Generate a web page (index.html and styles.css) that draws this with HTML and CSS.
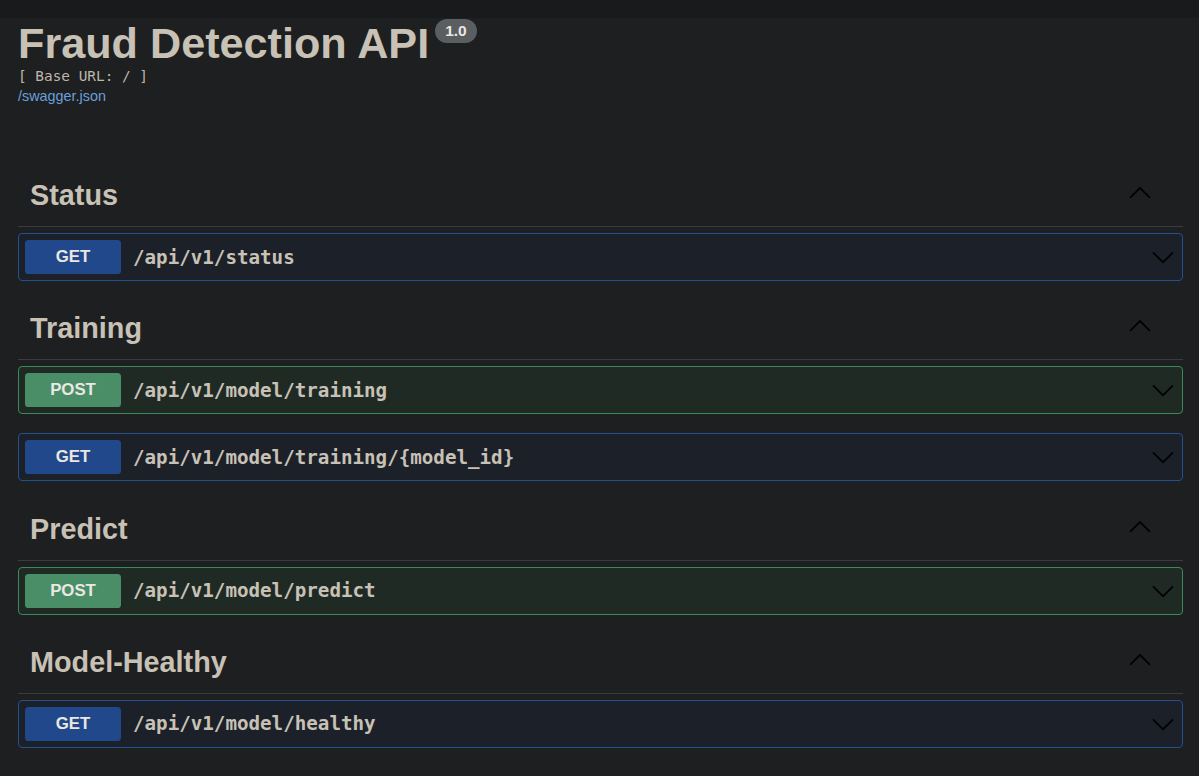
FILE: index.html
```html
<!DOCTYPE html>
<html>
<head>
<meta charset="utf-8">
<title>Fraud Detection API</title>
<link rel="stylesheet" href="styles.css">
</head>
<body>
<div class="topstrip"></div>
<div class="wrapper">
  <div class="info">
    <h2 class="title"><span>Fraud Detection API</span><span class="version">1.0</span></h2>
    <pre class="base-url">[ Base URL: / ]</pre>
    <a class="spec-link" href="#">/swagger.json</a>
  </div>

  <section class="tag-section">
    <h3 class="tag"><span>Status</span>
      <svg class="arrow-up" viewBox="0 0 20 20" width="24" height="24"><path d="M17.418 14.908c.272.268.709.268.979 0s.271-.701 0-.969l-7.908-7.83c-.27-.268-.707-.268-.979 0l-7.908 7.83c-.27.268-.27.701 0 .969.271.268.709.268.979 0L10 7.767l7.418 7.141z"/></svg>
    </h3>
    <div class="opblock get">
      <span class="method">GET</span><span class="path">/api/v1/status</span>
      <svg class="arrow-down" viewBox="0 0 20 20" width="24" height="24"><path d="M17.418 6.109c.272-.268.709-.268.979 0s.271.701 0 .969l-7.908 7.83c-.27.268-.707.268-.979 0l-7.908-7.83c-.27-.268-.27-.701 0-.969.271-.268.709-.268.979 0L10 13.25l7.418-7.141z"/></svg>
    </div>
  </section>

  <section class="tag-section">
    <h3 class="tag"><span>Training</span>
      <svg class="arrow-up" viewBox="0 0 20 20" width="24" height="24"><path d="M17.418 14.908c.272.268.709.268.979 0s.271-.701 0-.969l-7.908-7.83c-.27-.268-.707-.268-.979 0l-7.908 7.83c-.27.268-.27.701 0 .969.271.268.709.268.979 0L10 7.767l7.418 7.141z"/></svg>
    </h3>
    <div class="opblock post">
      <span class="method">POST</span><span class="path">/api/v1/model/training</span>
      <svg class="arrow-down" viewBox="0 0 20 20" width="24" height="24"><path d="M17.418 6.109c.272-.268.709-.268.979 0s.271.701 0 .969l-7.908 7.83c-.27.268-.707.268-.979 0l-7.908-7.83c-.27-.268-.27-.701 0-.969.271-.268.709-.268.979 0L10 13.25l7.418-7.141z"/></svg>
    </div>
    <div class="opblock get">
      <span class="method">GET</span><span class="path">/api/v1/model/training/{model_id}</span>
      <svg class="arrow-down" viewBox="0 0 20 20" width="24" height="24"><path d="M17.418 6.109c.272-.268.709-.268.979 0s.271.701 0 .969l-7.908 7.83c-.27.268-.707.268-.979 0l-7.908-7.83c-.27-.268-.27-.701 0-.969.271-.268.709-.268.979 0L10 13.25l7.418-7.141z"/></svg>
    </div>
  </section>

  <section class="tag-section">
    <h3 class="tag"><span>Predict</span>
      <svg class="arrow-up" viewBox="0 0 20 20" width="24" height="24"><path d="M17.418 14.908c.272.268.709.268.979 0s.271-.701 0-.969l-7.908-7.83c-.27-.268-.707-.268-.979 0l-7.908 7.83c-.27.268-.27.701 0 .969.271.268.709.268.979 0L10 7.767l7.418 7.141z"/></svg>
    </h3>
    <div class="opblock post">
      <span class="method">POST</span><span class="path">/api/v1/model/predict</span>
      <svg class="arrow-down" viewBox="0 0 20 20" width="24" height="24"><path d="M17.418 6.109c.272-.268.709-.268.979 0s.271.701 0 .969l-7.908 7.83c-.27.268-.707.268-.979 0l-7.908-7.83c-.27-.268-.27-.701 0-.969.271-.268.709-.268.979 0L10 13.25l7.418-7.141z"/></svg>
    </div>
  </section>

  <section class="tag-section">
    <h3 class="tag"><span>Model-Healthy</span>
      <svg class="arrow-up" viewBox="0 0 20 20" width="24" height="24"><path d="M17.418 14.908c.272.268.709.268.979 0s.271-.701 0-.969l-7.908-7.83c-.27-.268-.707-.268-.979 0l-7.908 7.83c-.27.268-.27.701 0 .969.271.268.709.268.979 0L10 7.767l7.418 7.141z"/></svg>
    </h3>
    <div class="opblock get">
      <span class="method">GET</span><span class="path">/api/v1/model/healthy</span>
      <svg class="arrow-down" viewBox="0 0 20 20" width="24" height="24"><path d="M17.418 6.109c.272-.268.709-.268.979 0s.271.701 0 .969l-7.908 7.83c-.27.268-.707.268-.979 0l-7.908-7.83c-.27-.268-.27-.701 0-.969.271-.268.709-.268.979 0L10 13.25l7.418-7.141z"/></svg>
    </div>
  </section>
</div>
</body>
</html>
```
FILE: styles.css
```css
html, body {
  margin: 0;
  padding: 0;
  background: #1e1f20;
  font-family: "Liberation Sans", Arial, sans-serif;
  color: #c8c1b5;
}

.topstrip {
  height: 18px;
  background: #191a1b;
}

.wrapper {
  padding: 0 16px 0 18px;
}

.info {
  display: flex;
  flex-direction: column;
  align-items: flex-start;
  height: 149px;
}

.title {
  display: flex;
  align-items: flex-start;
  margin: 0;
  padding-top: 1px;
  font-size: 43.2px;
  line-height: 48px;
  font-weight: 700;
  color: #c8c1b5;
}

.version {
  margin-left: 6px;
  margin-top: 0;
  height: 24px;
  padding: 0 10px;
  border-radius: 57px;
  background: #5b5e60;
  color: #ebe8e4;
  font-size: 15.5px;
  line-height: 24px;
  font-weight: 700;
}

.base-url {
  margin: 1px 0 0 0;
  font-family: "DejaVu Sans Mono", monospace;
  font-size: 14.4px;
  line-height: 17px;
  color: #bcb6ab;
}

.spec-link {
  margin-top: 3px;
  font-size: 14.4px;
  line-height: 17px;
  color: #6a9fdc;
  text-decoration: none;
}

.tag {
  display: flex;
  align-items: center;
  justify-content: space-between;
  margin: 0 0 6px 0;
  padding: 11px 31px 13px 12px;
  border-bottom: 1px solid #3a3b3c;
  font-size: 28.8px;
  line-height: 35px;
  font-weight: 700;
  color: #c8c1b5;
}

.arrow-up {
  fill: #000;
  margin-top: -7px;
}

.opblock {
  display: flex;
  align-items: center;
  height: 46px;
  padding: 0 6px;
  margin-bottom: 19.2px;
  border: 1px solid;
  border-radius: 4px;
}

.opblock.get {
  background: #1b2029;
  border-color: #23508f;
}

.opblock.post {
  background: #202a25;
  border-color: #3a8a5b;
}

.method {
  width: 96px;
  height: 34px;
  line-height: 34px;
  text-align: center;
  border-radius: 3.6px;
  font-size: 16.8px;
  font-weight: 700;
  color: #ebe8e4;
}

.get .method {
  background: #21488a;
}

.post .method {
  background: #4a8e67;
}

.path {
  flex: 1;
  margin-left: 12px;
  font-family: "DejaVu Sans Mono", monospace;
  font-size: 19.2px;
  font-weight: 700;
  color: #c8c1b5;
}

.arrow-down {
  fill: #000;
  margin-right: 1px;
}
```
